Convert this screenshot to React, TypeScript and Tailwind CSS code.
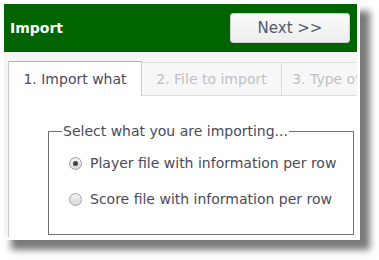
import { useState } from 'react';

const options = [
  'Player file with information per row',
  'Score file with information per row',
];

const tabs = ['1. Import what', '2. File to import', '3. Type of import'];

const Radio = ({ checked }: { checked: boolean }) => (
  <span className="flex h-[13px] w-[13px] shrink-0 items-center justify-center rounded-full border border-[#a0a0a0] bg-gradient-to-b from-[#f2f2f2] to-[#d8d8d8]">
    {checked && <span className="h-[5px] w-[5px] rounded-full bg-[#444]" />}
  </span>
);

export default function App() {
  const [selected, setSelected] = useState(0);

  return (
    <div className="h-[260px] w-[379px] overflow-hidden bg-white font-['DejaVu_Sans',Verdana,sans-serif]">
      <div className="ml-px mt-px flex h-[239px] w-[359px] flex-col bg-white p-[3px] shadow-[10px_10px_7px_#7a7a7a]">
        <div className="flex h-[48px] shrink-0 items-center justify-between bg-[#006400] pl-[6px] pr-[7px]">
          <span className="text-[14px] font-bold text-white">Import</span>
          <button
            type="button"
            className="h-[30px] w-[120px] rounded-[3px] border border-[#cfcfcf] bg-gradient-to-b from-[#fbfbfb] to-[#ededed] text-[15px] text-[#4f5a6a]"
          >
            Next &gt;&gt;
          </button>
        </div>
        <div className="flex flex-1 flex-col bg-[#f5f5f5] pl-[4px]">
          <div className="flex h-[44px] shrink-0 items-end overflow-hidden">
            {tabs.map((tab, i) => (
              <div
                key={tab}
                className={
                  i === 0
                    ? 'flex h-[35px] w-[134px] shrink-0 items-center justify-center border border-b-0 border-[#c7cdd6] border-t-[#aab4c4] bg-white text-[14px] text-[#4a4a5a]'
                    : 'flex h-[34px] w-[140px] shrink-0 items-center justify-center whitespace-nowrap border border-l-0 border-[#dcdcdc] bg-[#f7f7f7] text-[14px] text-[#c0c0c4]'
                }
              >
                {tab}
              </div>
            ))}
          </div>
          <div className="flex-1 border-l border-[#c7cdd6] bg-white pl-[39px] pt-[25px]">
            <fieldset className="h-[114px] w-[306px] border border-[#707070] pl-[20px] pt-[2px]">
              <legend className="-ml-[7px] px-[1px] text-[14px] text-[#4a4a5a]">
                Select what you are importing...
              </legend>
              <div className="mt-[9px] flex flex-col gap-[15px]">
                {options.map((opt, i) => (
                  <label
                    key={opt}
                    className="flex items-center gap-[8px] text-[14px] text-[#4a4a5a]"
                    onClick={() => setSelected(i)}
                  >
                    <Radio checked={selected === i} />
                    <span>{opt}</span>
                  </label>
                ))}
              </div>
            </fieldset>
          </div>
        </div>
      </div>
    </div>
  );
}
